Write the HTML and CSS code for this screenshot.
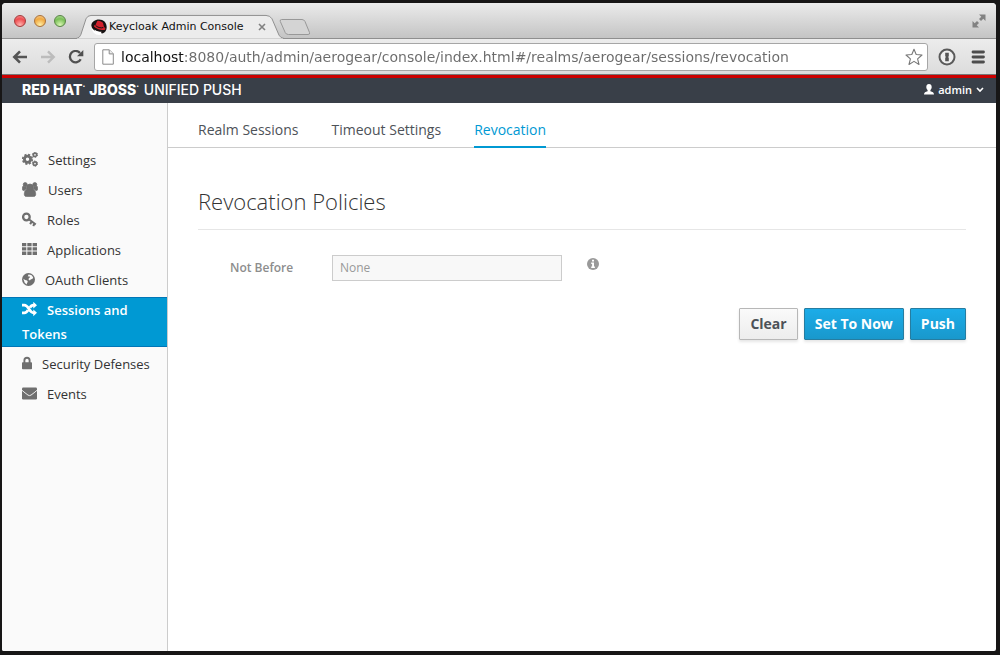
FILE: index.html
```html
<!DOCTYPE html>
<html lang="en">
<head>
<meta charset="utf-8">
<title>Keycloak Admin Console</title>
<link rel="stylesheet" href="styles.css">
</head>
<body>
<div class="window">
  <div class="titlebar">
    <div class="lights">
      <button class="light light-red" aria-label="Close window"></button>
      <button class="light light-yellow" aria-label="Minimize window"></button>
      <button class="light light-green" aria-label="Zoom window"></button>
    </div>
    <div class="browser-tab">
      <svg class="tab-shape" viewBox="0 0 208 26" preserveAspectRatio="none" aria-hidden="true">
        <path d="M0 25.5C3 25 4 23.500 5 21L10 5Q11.500 1.500 15 1.500H190Q194 1.500 196 5L203 22Q204.500 25 208 25.500" fill="#ececec" stroke="#8f8f8f"/>
        <path d="M1 26H207" stroke="#e9e9e9"/>
      </svg>
      <svg class="favicon" viewBox="0 0 16 16" aria-hidden="true">
        <circle cx="8" cy="8.500" r="7.500" fill="#fff"/>
        <path d="M.3 6.500C.5 3 4 .5 8 .5c4.500 0 7.700 3 7.700 7.500 0 3.500-2 6-4.500 6.500C8 13.500 1 12 .3 6.500z" fill="#191313"/>
        <path d="M4.500 6 6 2.500c.4-1 1.300-.8 2.200-.4 1.600.5 3.300.6 3.800 2L13 8c2 1 2 3-.3 3C9 11 4 9 3 7.400 2.700 6.600 3.500 6 4.500 6z" fill="#d3202b"/>
        <path d="M4.500 6.300c1.500 2 5.500 3.200 7.800 2.200" fill="none" stroke="#191313" stroke-width="1"/>
        <path d="M3.500 10.500c2 2 5 2.200 7 2.300L9.500 15.500C6.500 15.600 4 13.500 3.500 10.500z" fill="#fff"/>
      </svg>
      <span class="tab-title">Keycloak Admin Console</span>
      <button class="tab-close" aria-label="Close tab">
        <svg viewBox="0 0 8 8"><path d="M1 1l6 6M7 1L1 7" stroke="#818181" stroke-width="1.600"/></svg>
      </button>
    </div>
    <button class="new-tab" aria-label="New tab">
      <svg viewBox="0 0 32 16"><path d="M2.500.5H23q2 0 3 2l4.500 11q.8 2-1.500 2H9.500q-2.500 0-3.300-2L1.300 2.500Q.7.500 2.500.5z" fill="#d4d4d4" stroke="#989898"/></svg>
    </button>
    <button class="fullscreen" aria-label="Full screen">
      <svg viewBox="0 0 14 14"><path d="M7 .5h6.500V7l-2.200-2.200L9 7 7 5l2.300-2.300zM.5 7l2.200 2.200L5 7l2 2-2.300 2.300L7 13.500H.5z" fill="#828282"/></svg>
    </button>
  </div>

  <div class="toolbar">
    <button class="tool" aria-label="Back">
      <svg viewBox="0 0 16 14"><path d="M15 7H2.500M8 1.300 2.300 7 8 12.700" fill="none" stroke="#555" stroke-width="2.600"/></svg>
    </button>
    <button class="tool" aria-label="Forward">
      <svg viewBox="0 0 16 14"><path d="M1 7h12.500M8 1.300 13.700 7 8 12.700" fill="none" stroke="#bcbcbc" stroke-width="2.400"/></svg>
    </button>
    <button class="tool" aria-label="Reload">
      <svg viewBox="0 0 16 14"><path d="M12.700 9.300A5.700 5.700 0 1 1 12 3" fill="none" stroke="#505050" stroke-width="2.300"/><path d="M15.300 0v6.300H9z" fill="#505050"/></svg>
    </button>
    <div class="address">
      <svg class="page-icon" viewBox="0 0 12 16" aria-hidden="true"><path d="M.8.8h6.500l4 4v10.400H.8z" fill="#fff" stroke="#8b8b8b"/><path d="M7.200.8v4.100h4.100" fill="#eee" stroke="#8b8b8b"/></svg>
      <input class="url" type="text" aria-label="Address" spellcheck="false" value="localhost:8080/auth/admin/aerogear/console/index.html#/realms/aerogear/sessions/revocation">
      <button class="star" aria-label="Bookmark this page">
        <svg viewBox="0 0 18 18"><path d="M9 1.200l2.200 5.300 5.800.5-4.400 3.800L14 16.500 9 13.400 4 16.500l1.400-5.700L1 7l5.800-.5z" fill="#fff" stroke="#777" stroke-width="1.100" stroke-linejoin="round"/></svg>
      </button>
    </div>
    <button class="tool tool-wide" aria-label="1Password">
      <svg viewBox="0 0 18 18"><circle cx="9" cy="9" r="7.500" fill="#eee" stroke="#5a5a5a" stroke-width="2"/><path d="M7.200 4.700h3.600v3.500l-.8.800.8.800v3.500H7.200V9.800L8 9l-.8-.8z" fill="#555"/></svg>
    </button>
    <button class="tool" aria-label="Menu">
      <svg viewBox="0 0 16 14"><path d="M3 2h10.500M3 7h10.500M3 12h10.500" stroke="#4d4d4d" stroke-width="2.800" stroke-linecap="round"/></svg>
    </button>
  </div>

  <header class="masthead">
    <div class="brand"><b>RED HAT<sup>·</sup> JBOSS<sup>·</sup></b> UNIFIED PUSH</div>
    <button class="user-menu">
      <svg class="person" viewBox="0 0 10 11" aria-hidden="true"><path d="M5 0c1.700 0 2.700 1.200 2.700 2.900 0 1.300-.6 2.500-1.300 3.100v1.200C8.500 7.900 10 8.400 10 10.500H0c0-2.100 1.500-2.600 3.600-3.300V6C2.900 5.400 2.300 4.200 2.300 2.900 2.300 1.200 3.300 0 5 0z" fill="#fff"/></svg>
      admin
      <svg class="chevron" viewBox="0 0 8 6" aria-hidden="true"><path d="M1 1l3 3 3-3" fill="none" stroke="#fff" stroke-width="1.600"/></svg>
    </button>
  </header>

  <div class="body">
    <nav class="sidebar" aria-label="Realm">
      <a class="nav-item" href="#settings"><svg class="icon" width="16" height="15" viewBox="0 0 16 15"><g fill="none"><circle cx="5.500" cy="7.300" r="3.100" stroke-width="2.800"/><circle cx="5.500" cy="7.300" r="4.800" stroke-width="1.600" stroke-dasharray="2.100 1.670"/><circle cx="13" cy="2.800" r="1.700" stroke-width="1.700"/><circle cx="13" cy="2.800" r="2.600" stroke-width="1" stroke-dasharray="1.400 1.323"/><circle cx="13" cy="11.600" r="1.700" stroke-width="1.700"/><circle cx="13" cy="11.600" r="2.600" stroke-width="1" stroke-dasharray="1.400 1.323"/></g></svg>Settings</a>
      <a class="nav-item" href="#users"><svg class="icon" width="16" height="15" viewBox="0 0 16 15"><g stroke-width=".7"><path d="M8 2A3.300 3.300 0 0 1 11.300 5.300 3.300 3.300 0 0 1 8 8.600 3.300 3.300 0 0 1 4.700 5.300 3.300 3.300 0 0 1 8 2zM5 7.400Q8 9 11 7.400c2 .2 2.700 2.600 2.700 4.800 0 1.600-1 2.400-2.300 2.400H4.600c-1.300 0-2.300-.8-2.300-2.400 0-2.200.7-4.600 2.700-4.800z"/><circle cx="3.200" cy="2.500" r="2"/><circle cx="12.800" cy="2.500" r="2"/><path d="M1.200 4q1.800 1.200 3.200.2-.4 2 .4 3-1.800.1-2.600 1.300H1.500C.8 8.500.4 8 .4 7c0-1.500.2-2.800.8-3zm13.600 0q-1.800 1.200-3.200.2.400 2-.4 3 1.800.1 2.600 1.300h.7c.7 0 1.100-.5 1.100-1.500 0-1.500-.2-2.800-.8-3z"/></g></svg>Users</a>
      <a class="nav-item" href="#roles"><svg class="icon" width="15" height="15" viewBox="0 0 15 15"><circle cx="4.400" cy="5" r="3.300" fill="none" stroke-width="2.300"/><path d="M6.500 7l7.300 5.500M9.800 9.500l-1.700 2.600M12.700 11.200l-1.500 2.700" fill="none" stroke-width="2.100"/></svg>Roles</a>
      <a class="nav-item" href="#applications"><svg class="icon" width="15" height="15" viewBox="0 0 15 15"><path d="M0 1h4.300v3.300H0zM5.300 1h4.300v3.300H5.300zM10.600 1H15v3.300h-4.400zM0 5.300h4.300v3.300H0zM5.300 5.300h4.300v3.300H5.300zM10.600 5.300H15v3.300h-4.400zM0 9.600h4.300v3.300H0zM5.300 9.600h4.300v3.300H5.300zM10.600 9.600H15v3.300h-4.400z" stroke="none"/></svg>Applications</a>
      <a class="nav-item" href="#oauth"><svg class="icon" width="13" height="15" viewBox="0 0 13 15"><circle cx="6.500" cy="7.500" r="6.500" stroke="none"/><path d="M6.500 2.500l2.800.5 1.900 2.200-.8 1.800-1.500.2-1 1.300L6.500 7.500l.3-1.300L8 5.300l-.7-1-1.500.2zM1.300 6.700l1.800 1.300 2 .6.800 1.400-1 1.100.1 1.300-2.200-1.300z" fill="#fafafa" stroke="none"/></svg>OAuth Clients</a>
      <a class="nav-item active" href="#sessions" aria-current="page"><svg class="icon" width="15" height="15" viewBox="0 0 15 15"><path d="M0 3.200h2.300C7 3.200 7 10.800 11.500 10.800H12M0 10.800h2.300c1.900 0 2.900-1.200 3.600-2.600M8 5.600c.8-1.500 1.700-2.400 3.500-2.400H12" fill="none" stroke-width="2.700"/><path d="M11.300-.2L15 3.200l-3.700 3.400zM11.300 7.400L15 10.800l-3.700 3.400z" stroke="none"/></svg>Sessions and Tokens</a>
      <a class="nav-item" href="#security"><svg class="icon" width="10" height="15" viewBox="0 0 10 15"><path d="M2.400 7V4.300a2.600 2.600 0 0 1 5.200 0V7" fill="none" stroke-width="1.900"/><rect y="6.200" width="10" height="7" rx=".8" stroke="none"/></svg>Security Defenses</a>
      <a class="nav-item" href="#events"><svg class="icon" width="15" height="15" viewBox="0 0 15 15"><path d="M1.200 1.500h12.600Q15 1.500 15 2.800v9.400q0 1.300-1.200 1.300H1.200Q0 13.500 0 12.200V2.800Q0 1.500 1.200 1.500z" stroke="none"/><path d="M0 4.300c2 1.800 4 3.300 6 4.800q1.500 1 3 0c2-1.500 4-3 6-4.800" fill="none" stroke="#fafafa" stroke-width=".9"/></svg>Events</a>
    </nav>

    <main class="content">
      <nav class="tabs" aria-label="Sessions">
        <a class="tab" href="#realm-sessions">Realm Sessions</a>
        <a class="tab" href="#timeout">Timeout Settings</a>
        <a class="tab selected" href="#revocation" aria-current="page">Revocation</a>
      </nav>
      <form class="panel">
        <h1 class="heading">Revocation Policies</h1>
        <div class="field">
          <label class="label" for="not-before">Not Before</label>
          <input class="text" id="not-before" type="text" value="None" readonly>
          <svg class="info" viewBox="0 0 12 12" role="img" aria-label="Help"><circle cx="6" cy="6" r="6" fill="#999"/><path d="M5 1.800h2v1.700H5zM4.200 4.500H7v3.900h.9V10H4.200V8.400h.9V6h-.9z" fill="#fff"/></svg>
        </div>
        <div class="actions">
          <button class="btn" type="button">Clear</button>
          <button class="btn primary" type="button">Set To Now</button>
          <button class="btn primary" type="button">Push</button>
        </div>
      </form>
    </main>
  </div>
</div>
</body>
</html>
```

FILE: styles.css
```css
* { box-sizing: border-box; }

body {
  margin: 0;
  padding: 3px 4px 4px 2px;
  min-height: 100vh;
  display: flex;
  background: #171616;
  font-family: "Open Sans", sans-serif;
  font-size: 13px;
  color: #333;
}

button {
  font: inherit;
  padding: 0;
  border: 0;
  background: none;
}

svg { display: block; }

.window {
  flex: 1;
  min-width: 0;
  display: flex;
  flex-direction: column;
  background: #fff;
  border-radius: 4px 4px 2px 2px;
  overflow: hidden;
}

/* Browser chrome */
.titlebar {
  display: flex;
  align-items: flex-end;
  height: 36px;
  padding: 0 10px 0 12px;
  background: linear-gradient(#ebebeb, #c4c4c4);
  border-bottom: 1px solid #8f8f8f;
}

.lights {
  display: flex;
  gap: 8px;
  align-self: center;
}

.light {
  width: 12px;
  height: 12px;
  border: 1px solid;
  border-radius: 50%;
}

.light-red { border-color: #a33b3c; background: radial-gradient(circle at 50% 90%, #ffb5b0, #ee4c50 60%, #f79a9a); }
.light-yellow { border-color: #a9713a; background: radial-gradient(circle at 50% 90%, #fff0a8, #f0a840 60%, #f9d29a); }
.light-green { border-color: #588446; background: radial-gradient(circle at 50% 90%, #dcf8b6, #79bf57 60%, #b9e0a0); }

.browser-tab {
  position: relative;
  display: flex;
  align-items: center;
  width: 208px;
  height: 25px;
  margin: 0 0 -1px 10px;
  padding-left: 15px;
}

.tab-shape {
  position: absolute;
  inset: 0;
  width: 100%;
  height: 100%;
}

.favicon, .tab-title, .tab-close { position: relative; }

.favicon { width: 16px; height: 16px; }

.tab-title {
  flex: 1;
  padding-left: 2px;
  font-family: "DejaVu Sans", sans-serif;
  font-size: 11px;
  color: #111;
  white-space: nowrap;
}

.tab-close { margin-right: 18px; }
.tab-close svg { width: 8px; height: 8px; }

.new-tab { margin-bottom: 3px; margin-left: -5px; }
.new-tab svg { width: 32px; height: 16px; }

.fullscreen {
  align-self: center;
  margin-left: auto;
}

.fullscreen svg { width: 14px; height: 14px; }

.toolbar {
  display: flex;
  align-items: center;
  gap: 12px;
  height: 36px;
  padding: 0 10px;
  background: linear-gradient(#ececec, #dcdcdc);
  border-bottom: 1px solid #777;
}

.tool svg { width: 16px; height: 14px; }
.tool-wide { margin: 0 2px 0 -2px; }
.tool-wide svg { width: 18px; height: 18px; }

.address {
  flex: 1;
  min-width: 0;
  display: flex;
  align-items: center;
  gap: 7px;
  height: 28px;
  margin-left: -2px;
  padding: 0 4px 0 7px;
  background: #fff;
  border: 1px solid #a6a6a6;
  border-radius: 3px;
}

.page-icon { width: 12px; height: 16px; }
.star svg { width: 18px; height: 18px; }

.url {
  flex: 1;
  min-width: 0;
  height: 24px;
  padding: 0;
  border: 0;
  font-family: "DejaVu Sans", sans-serif;
  font-size: 14px;
  color: transparent;
  background: linear-gradient(90deg, #111 64px, #6b6b6b 64px);
  background-clip: text;
}

/* Application header */
.masthead {
  display: flex;
  align-items: center;
  justify-content: space-between;
  height: 28px;
  padding: 0 12px 2px 20px;
  background: #393f48;
  border-top: 3px solid #cc0000;
  color: #fff;
}

.brand {
  font-family: Inter, sans-serif;
  font-size: 14px;
  font-weight: 500;
}

.brand b { font-weight: 800; }
.brand sup { margin-right: 1px; font-size: 8px; line-height: 0; }

.user-menu {
  display: flex;
  align-items: center;
  gap: 4px;
  color: #fff;
  font-size: 11px;
  font-weight: 600;
}

.person { width: 10px; height: 11px; }
.chevron { width: 8px; height: 6px; }

.body { flex: 1; display: flex; }

.sidebar {
  width: 166px;
  flex: none;
  display: flex;
  flex-direction: column;
  gap: 4px;
  padding-top: 44px;
  background: #fafafa;
  border-right: 1px solid #ccc;
}

.nav-item {
  padding: 0 16px 0 20px;
  border: solid transparent;
  border-width: 1px 0;
  line-height: 24px;
  color: #333;
  text-decoration: none;
}

.nav-item.active {
  padding-right: 32px;
  background: #0099d3;
  border-color: #0076b7;
  color: #fff;
  font-weight: 600;
}

.icon {
  display: inline-block;
  margin-right: 10px;
  vertical-align: -2px;
  fill: #6f6f6f;
  stroke: #6f6f6f;
}

.active .icon { fill: #fff; stroke: #fff; }

.content { flex: 1; min-width: 0; }

.tabs {
  display: flex;
  gap: 33px;
  height: 45px;
  padding-left: 30px;
  border-bottom: 1px solid #ccc;
}

.tab {
  height: 45px;
  padding-top: 17px;
  font-size: 14px;
  line-height: 20px;
  color: #4d5258;
  text-decoration: none;
}

.tab.selected {
  color: #0099d3;
  border-bottom: 2px solid #0099d3;
}

.panel { padding: 37px 30px 0; }

.heading {
  margin: 0;
  padding-bottom: 12px;
  border-bottom: 1px solid #e6e6e6;
  font-size: 22px;
  font-weight: 300;
  line-height: 32px;
}

.field {
  display: flex;
  align-items: center;
  padding: 25px 0 27px 32px;
}

.label {
  width: 102px;
  padding-bottom: 2px;
  font-size: 12px;
  font-weight: 600;
  color: #8d8d8d;
}

.text {
  width: 230px;
  height: 26px;
  padding: 0 7px 2px;
  border: 1px solid #ccc;
  background: #f8f8f8;
  font: 12px "Open Sans", sans-serif;
  color: #999;
}

.info {
  width: 12px;
  height: 12px;
  margin: 0 0 8px 25px;
}

.actions {
  display: flex;
  justify-content: flex-end;
  gap: 6px;
}

.btn {
  height: 32px;
  padding: 0 10px 2px;
  border: 1px solid #b7b7b7;
  border-radius: 1px;
  background: linear-gradient(#fafafa, #ededed);
  box-shadow: 0 2px 3px rgba(0, 0, 0, 0.1);
  font-size: 14px;
  font-weight: 700;
  color: #4d5258;
}

.btn.primary {
  border-color: #267da1;
  background: linear-gradient(#1cace8, #1998cc);
  color: #fff;
}
```
